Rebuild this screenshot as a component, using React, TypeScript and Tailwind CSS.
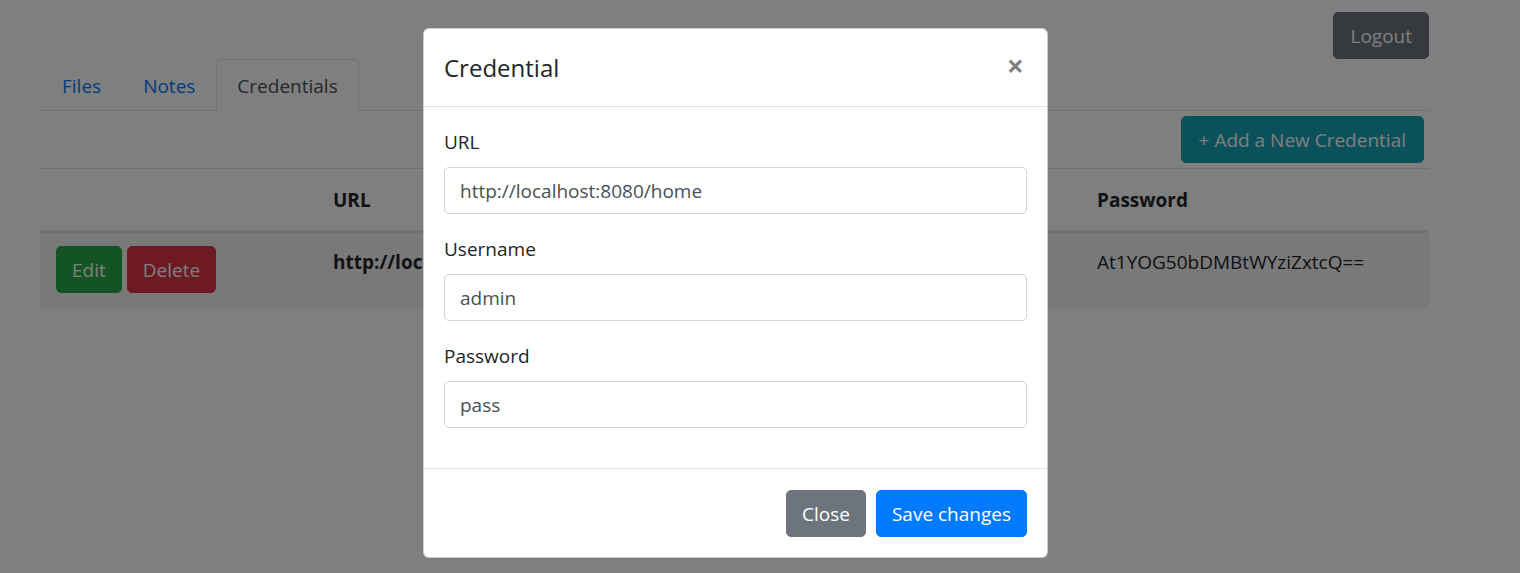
import React from "react";

const font = { fontFamily: '"Open Sans", "Noto Sans", sans-serif' };

export default function App() {
  return (
    <div
      className="relative w-[1520px] h-[573px] overflow-hidden bg-white text-[19px] leading-[30px] text-[#212529]"
      style={font}
    >
      {/* Page */}
      <div className="ml-[40px] w-[1389px]">
        <div className="flex justify-end pt-[12px]">
          <button className="h-[47px] px-[16px] rounded-[5px] bg-[#6c757d] text-white border border-[#6c757d]">
            Logout
          </button>
        </div>

        <div className="flex h-[52px] border-b border-[#dee2e6]">
          <div className="h-[52px] pl-[21px] pr-[20px] pt-[11px] border border-transparent text-[#007bff]">Files</div>
          <div className="h-[52px] px-[20px] pt-[11px] border border-transparent text-[#007bff]">Notes</div>
          <div className="h-[52px] px-[20px] pt-[11px] border border-[#dee2e6] border-b-white bg-white rounded-t-[5px] text-[#495057]">
            Credentials
          </div>
        </div>

        <div className="flex justify-end">
          <button className="m-[5px] h-[47px] px-[17px] rounded-[5px] bg-[#17a2b8] text-white border border-[#17a2b8]">
            + Add a New Credential
          </button>
        </div>

        <div className="w-full">
          <div className="grid grid-cols-[278px_417px_347px_347px] border-t border-[#dee2e6] border-b-2">
            <div className="p-[15px]"></div>
            <div className="p-[15px] pt-[16px] font-bold">URL</div>
            <div className="p-[15px] pt-[16px] font-bold">Username</div>
            <div className="p-[15px] pt-[16px] font-bold">Password</div>
          </div>
          <div className="grid grid-cols-[278px_417px_347px_347px] border-t border-[#dee2e6] bg-[#f2f2f2]">
            <div className="pl-[16px] pr-[15px] pt-[13px] pb-[15px] flex gap-[5px]">
              <button className="h-[47px] px-[15px] rounded-[5px] bg-[#28a745] text-white border border-[#28a745]">
                Edit
              </button>
              <button className="h-[47px] px-[15px] rounded-[5px] bg-[#dc3545] text-white border border-[#dc3545]">
                Delete
              </button>
            </div>
            <div className="px-[15px] pt-[14px] font-bold">http://localhost:8080/home</div>
            <div className="px-[15px] pt-[14px]">admin</div>
            <div className="px-[15px] pt-[14px]">At1YOG50bDMBtWYziZxtcQ==</div>
          </div>
        </div>
      </div>

      {/* Backdrop */}
      <div className="absolute inset-0 bg-black/50"></div>

      {/* Modal */}
      <div className="absolute left-[423px] top-[28px] w-[625px] bg-white border border-black/20 rounded-[6px] flex flex-col">
        <div className="h-[78px] flex items-center justify-between px-[20px] border-b border-[#dee2e6]">
          <div className="text-[24px] leading-[37px] font-medium text-[#212529]">Credential</div>
          <div className="text-[30px] leading-[30px] font-bold text-black/50 -mt-[4px] mr-[3px]">×</div>
        </div>
        <div className="p-[20px]">
          {[
            ["URL", "http://localhost:8080/home"],
            ["Username", "admin"],
            ["Password", "pass"],
          ].map(([label, value]) => (
            <div key={label} className="mb-[20px]">
              <div className="mb-[10px]">{label}</div>
              <div className="h-[47px] flex items-center px-[15px] border border-[#ced4da] rounded-[5px] text-[#495057]">
                {value}
              </div>
            </div>
          ))}
        </div>
        <div className="flex justify-end items-center px-[15px] pt-[16px] pb-[15px] border-t border-[#dee2e6]">
          <button className="m-[5px] h-[47px] px-[15px] rounded-[5px] bg-[#6c757d] text-white border border-[#6c757d]">
            Close
          </button>
          <button className="m-[5px] h-[47px] px-[15px] rounded-[5px] bg-[#007bff] text-white border border-[#007bff]">
            Save changes
          </button>
        </div>
      </div>
    </div>
  );
}
